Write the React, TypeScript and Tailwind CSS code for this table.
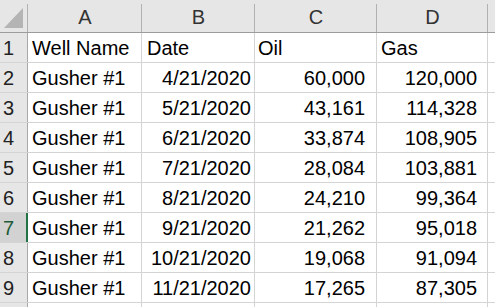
import React from "react";

const rows: [string, string, string, string, string][] = [
  ["1", "Well Name", "Date", "Oil", "Gas"],
  ["2", "Gusher #1", "4/21/2020", "60,000", "120,000"],
  ["3", "Gusher #1", "5/21/2020", "43,161", "114,328"],
  ["4", "Gusher #1", "6/21/2020", "33,874", "108,905"],
  ["5", "Gusher #1", "7/21/2020", "28,084", "103,881"],
  ["6", "Gusher #1", "8/21/2020", "24,210", "99,364"],
  ["7", "Gusher #1", "9/21/2020", "21,262", "95,018"],
  ["8", "Gusher #1", "10/21/2020", "19,068", "91,094"],
  ["9", "Gusher #1", "11/21/2020", "17,265", "87,305"],
];

function HeadCell({ w, label }: { w: string; label: string }) {
  return (
    <div className={`relative ${w} h-full flex items-end justify-center pb-[5px] leading-none text-[#333333]`}>
      {label}
      <div className="absolute right-0 top-[4px] bottom-0 w-px bg-[#b1b1b1]" />
    </div>
  );
}

export default function App() {
  return (
    <div className="w-[495px] h-[307px] overflow-hidden bg-white font-['Liberation_Sans',Arial,sans-serif] text-[20px] text-black">
      <div className="flex h-[33px] bg-[#e6e6e6] border-b border-[#9c9c9c]">
        <div className="relative w-[28px] h-full">
          <svg className="absolute left-0 top-0" width="28" height="32" viewBox="0 0 28 32">
            <polygon points="4,28 23,28 23,8" fill="#b4b4b4" />
          </svg>
          <div className="absolute right-0 top-[4px] bottom-0 w-px bg-[#b1b1b1]" />
        </div>
        <HeadCell w="w-[114px]" label="A" />
        <HeadCell w="w-[113px]" label="B" />
        <HeadCell w="w-[122px]" label="C" />
        <HeadCell w="w-[111px]" label="D" />
        <div className="flex-1" />
      </div>
      {rows.map((r, i) => {
        const sel = r[0] === "7";
        const header = i === 0;
        return (
          <div key={r[0]} className="flex h-[30px] border-b border-[#d4d4d4]">
            <div
              className={`w-[28px] h-full flex items-end pl-[3px] pb-[4px] leading-none ${
                sel
                  ? "bg-[#d2d2d2] border-r-2 border-[#217346] text-[#1e5c38]"
                  : "bg-[#e6e6e6] border-r border-[#a8a8a8] text-[#222222]"
              }`}
            >
              {r[0]}
            </div>
            <div className="w-[114px] h-full flex items-end pl-[4px] pb-[4px] leading-none border-r border-[#d4d4d4]">
              {r[1]}
            </div>
            <div
              className={`w-[113px] h-full flex items-end pb-[4px] leading-none border-r border-[#d4d4d4] ${
                header ? "pl-[5px]" : "justify-end pr-[3px]"
              }`}
            >
              {r[2]}
            </div>
            <div
              className={`w-[122px] h-full flex items-end pb-[4px] leading-none border-r border-[#d4d4d4] ${
                header ? "pl-[3px]" : "justify-end pr-[11px]"
              }`}
            >
              {r[3]}
            </div>
            <div
              className={`w-[111px] h-full flex items-end pb-[4px] leading-none border-r border-[#d4d4d4] ${
                header ? "pl-[4px]" : "justify-end pr-[10px]"
              }`}
            >
              {r[4]}
            </div>
            <div className="flex-1" />
          </div>
        );
      })}
      <div className="flex h-[30px]">
        <div className="w-[28px] h-full bg-[#e6e6e6] border-r border-[#a8a8a8]" />
        <div className="w-[114px] h-full border-r border-[#d4d4d4]" />
        <div className="w-[113px] h-full border-r border-[#d4d4d4]" />
        <div className="w-[122px] h-full border-r border-[#d4d4d4]" />
        <div className="w-[111px] h-full border-r border-[#d4d4d4]" />
      </div>
    </div>
  );
}
